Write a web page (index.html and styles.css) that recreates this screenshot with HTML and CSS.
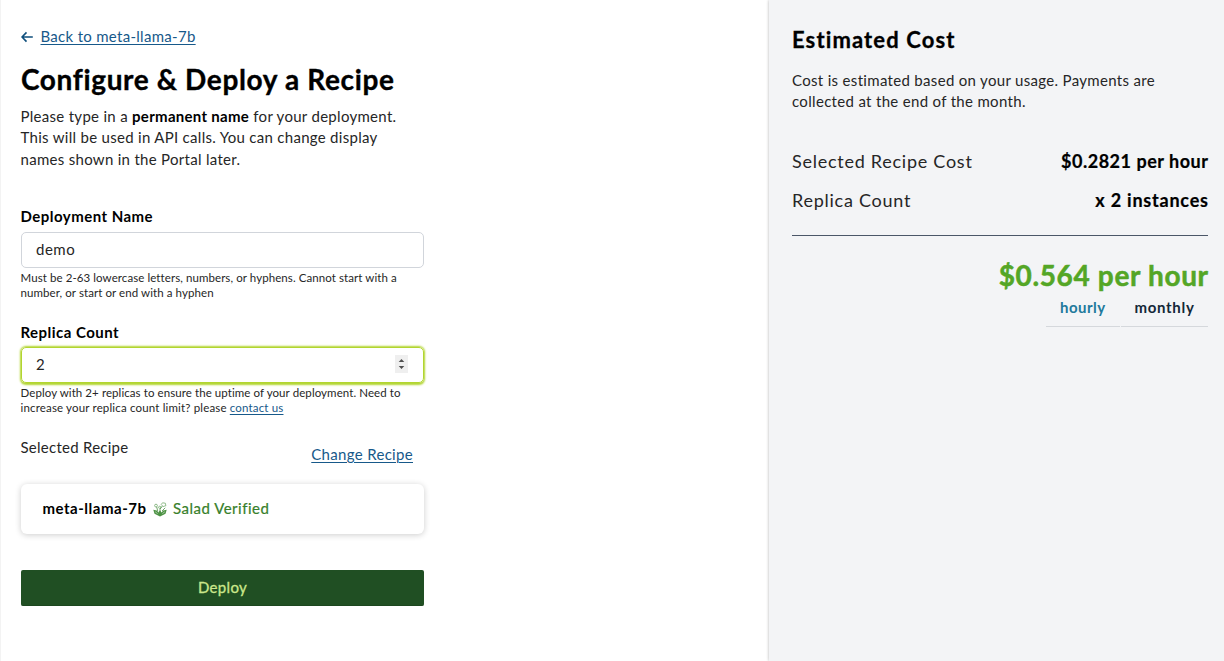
FILE: index.html
```
<!DOCTYPE html>
<html lang="en">
<head>
<meta charset="utf-8">
<title>Configure &amp; Deploy a Recipe</title>
<link rel="stylesheet" href="styles.css">
</head>
<body>
<div class="page">
  <main class="configure">
    <nav class="back">
      <svg class="back-arrow" viewBox="0 0 12 12" width="12" height="12"><path d="M11.8 6H1M5.5 1.4 1 6l4.5 4.6" fill="none" stroke="currentColor" stroke-width="1.6"/></svg>
      <a class="link back-link" href="#">Back to meta-llama-7b</a>
    </nav>
    <h1 class="title">Configure &amp; Deploy a Recipe</h1>
    <p class="intro">Please type in a <strong>permanent name</strong> for your deployment.<br>This will be used in API calls. You can change display<br>names shown in the Portal later.</p>

    <div class="field name-field">
      <label class="label">Deployment Name</label>
      <div class="input"><span class="value">demo</span></div>
      <p class="help">Must be 2-63 lowercase letters, numbers, or hyphens. Cannot start with a<br>number, or start or end with a hyphen</p>
    </div>

    <div class="field replica-field">
      <label class="label">Replica Count</label>
      <div class="input focused"><span class="value">2</span>
        <svg class="spinner" viewBox="0 0 13 18" width="13" height="18"><path fill="#efefef" d="M0 0h13v18H0z"/><path fill="#505050" d="M6.5 4 9.3 7H3.7zM6.5 14 9.3 11H3.7z"/></svg>
      </div>
      <p class="help">Deploy with 2+ replicas to ensure the uptime of your deployment. Need to<br><span class="limit">increase your replica count limit? please <a class="link" href="#">contact us</a></span></p>
    </div>

    <div class="recipe-head"><span class="recipe-label">Selected Recipe</span><a class="link change" href="#">Change Recipe</a></div>
    <div class="card">
      <strong class="model">meta-llama-7b</strong>
      <svg class="salad" viewBox="0 0 14 15" width="14" height="15" fill="none" stroke="#4d9244"><path d="M.3 7.8 3.8 8.4 5.4 10.5 7 8.2 8.6 10.5l1.6-2.1 3.5-.6-1.2 3.9L7 14.6l-5.5-2.9z" fill="#4d9244" stroke="none"/><path d="M7 13V7.2L9.4 4M4.8 9.5 3.7 4.9M9 9l3.2-3.2" stroke-width=".8"/><circle cx="3" cy="3.6" r="1.4" stroke-width=".6"/><circle cx="6.7" cy="5.3" r="1.1" stroke-width=".6"/><path d="M8.2 2.5 9.5.8l2.8.4.6 2.5L10.2 4.5z" stroke-width=".6"/><path d="m2.2 9.8 2.4 1.8M11.8 9.8l-2.4 1.8" stroke="#fff" stroke-width=".5"/></svg>
      <span class="verified">Salad Verified</span>
    </div>
    <button class="deploy">Deploy</button>
  </main>

  <aside class="cost">
    <h2 class="cost-title">Estimated Cost</h2>
    <p class="cost-text">Cost is estimated based on your usage. Payments are<br>collected at the end of the month.</p>
    <div class="row"><span class="row-label">Selected Recipe Cost</span><strong class="price">$0.2821 per hour</strong></div>
    <div class="row"><span class="row-label">Replica Count</span><strong class="count">x 2 instances</strong></div>
    <div class="total">$0.564 per hour</div>
    <div class="tabs"><span class="tab active">hourly</span><span class="tab monthly">monthly</span></div>
  </aside>
</div>
</body>
</html>
```
FILE: styles.css
```
* { box-sizing: border-box; }
body { margin: 0; background: #fff; color: #262626; font: 15px/21.5px Lato, "Open Sans", sans-serif; letter-spacing: .295px; }
h1, h2, p { margin: 0; }
strong { color: #000; }
.page { display: flex; height: 661px; overflow: hidden; border-left: 1px solid #f3f3f3; }
.configure { width: 768px; padding: 25px 0 0 20px; }
.link { color: #17598a; text-decoration: underline; text-underline-offset: 2px; text-decoration-thickness: 1px; }
.back { display: flex; align-items: center; height: 24px; gap: 8px; margin-left: -.5px; white-space: nowrap; }
.back-arrow { color: #0f4f7c; }
.title { margin-top: 12px; color: #000; font-size: 28px; line-height: 36px; font-weight: 700; letter-spacing: .64px; -webkit-text-stroke: .35px #000; white-space: nowrap; }
.intro { margin-top: 8.5px; margin-left: -.5px; white-space: nowrap; }
.field { width: 403px; }
.name-field { margin-top: 35.5px; }
.replica-field { margin-top: 22px; }
.label { display: block; height: 26px; margin-left: -.5px; line-height: 20px; font-weight: 700; letter-spacing: .47px; color: #000; }
.replica-field .label { height: 25px; }
.input { display: flex; align-items: center; justify-content: space-between; height: 36px; padding: 0 15px 0 14px; border: 1px solid #d1d5db; border-radius: 5px; letter-spacing: .5px; }
.input.focused { border-color: #b2d530; box-shadow: 0 .5px 2px 1px #b2d530; }
.spinner { margin-top: -1px; }
.help { margin-top: 2px; margin-left: -.5px; font-size: 11.5px; line-height: 15px; letter-spacing: .083px; white-space: nowrap; }
.limit { letter-spacing: .165px; }
.recipe-head { display: flex; justify-content: space-between; width: 392px; margin-top: 22px; }
.recipe-label { margin-left: -.5px; letter-spacing: .26px; }
.change { margin-top: 7px; letter-spacing: .32px; }
.card { display: flex; align-items: center; width: 403px; height: 50px; margin-top: 19px; padding-left: 21.5px; border-radius: 6px; box-shadow: 0 1px 6px rgba(0,0,0,.2); }
.model { letter-spacing: .51px; }
.salad { margin: 1px 6px 0 6.5px; }
.verified { color: #38802b; letter-spacing: .5px; -webkit-text-stroke: .2px #38802b; }
.deploy { display: block; width: 403px; height: 36px; margin-top: 36px; padding: 0; border: 0; border-bottom: 1px solid #1c471f; border-radius: 2px; background: #204f23; color: #cbe78b; font: inherit; letter-spacing: .3px; -webkit-text-stroke: .3px #cbe78b; }
.cost { flex: 1; padding: 26px 16px 0 23px; background: #f3f4f6; box-shadow: 0 0 3px rgba(0,0,0,.3); }
.cost-title { color: #000; font-size: 22px; line-height: 28px; letter-spacing: 1.12px; -webkit-text-stroke: .3px #000; }
.cost-text { margin-top: 15.5px; letter-spacing: .32px; white-space: nowrap; }
.row { display: flex; justify-content: space-between; font-size: 18px; line-height: 24px; letter-spacing: .74px; }
.cost-text + .row { margin-top: 36.5px; }
.row + .row { margin-top: 15px; padding-bottom: 23px; border-bottom: 1px solid #4b5768; }
.price, .count { -webkit-text-stroke: .2px #000; }
.price { margin-right: -.5px; letter-spacing: .52px; }
.count { margin-right: -.75px; letter-spacing: .78px; }
.total { margin: 21px -.7px 0 0; text-align: right; color: #54a626; font-size: 28px; line-height: 36px; font-weight: 700; letter-spacing: .65px; -webkit-text-stroke: .5px #54a626; }
.tabs { display: flex; justify-content: flex-end; gap: 1px; font-weight: 700; color: #142838; }
.tab { height: 34px; padding: 4px 14px 0; border-bottom: 1px solid #d5d8dc; letter-spacing: .45px; }
.monthly { padding-right: 13.5px; letter-spacing: .68px; }
.active { color: #21799c; }
```
